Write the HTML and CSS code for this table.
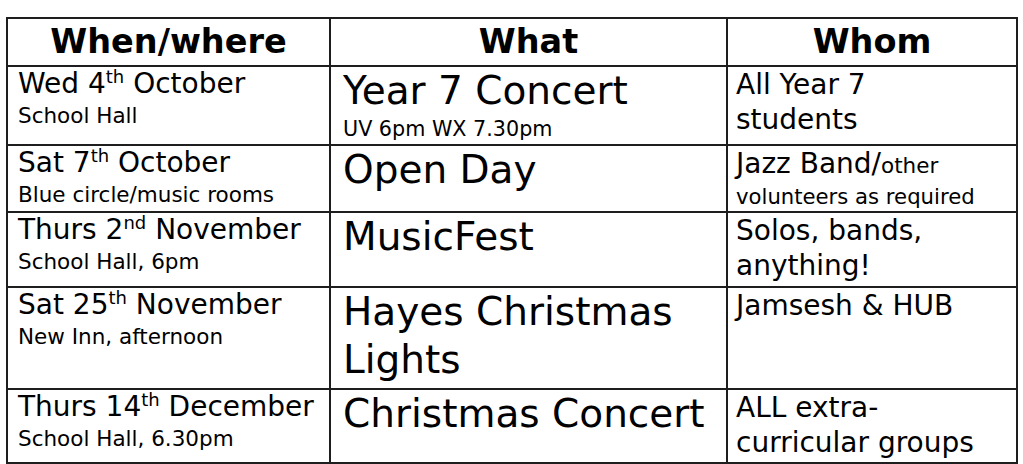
FILE: index.html
```html
<!DOCTYPE html>
<html>
<head>
<meta charset="utf-8">
<link rel="stylesheet" href="styles.css">
</head>
<body>
<table class="events">
  <colgroup>
    <col class="c-when">
    <col class="c-what">
    <col class="c-whom">
  </colgroup>
  <tr class="head">
    <th>When/where</th>
    <th>What</th>
    <th>Whom</th>
  </tr>
  <tr class="r1">
    <td><div class="date">Wed 4<sup>th</sup> October</div><div class="place">School Hall</div></td>
    <td><div class="what">Year 7 Concert</div><div class="whatsub">UV 6pm WX 7.30pm</div></td>
    <td><div class="whom">All Year 7<br>students</div></td>
  </tr>
  <tr class="r2">
    <td><div class="date">Sat 7<sup>th</sup> October</div><div class="place">Blue circle/music rooms</div></td>
    <td><div class="what">Open Day</div></td>
    <td><div class="whom">Jazz Band/<span class="small">other</span></div><div class="whomsmall">volunteers as required</div></td>
  </tr>
  <tr class="r3">
    <td><div class="date">Thurs 2<sup>nd</sup> November</div><div class="place">School Hall, 6pm</div></td>
    <td><div class="what">MusicFest</div></td>
    <td><div class="whom">Solos, bands,<br>anything!</div></td>
  </tr>
  <tr class="r4">
    <td><div class="date">Sat 25<sup>th</sup> November</div><div class="place">New Inn, afternoon</div></td>
    <td><div class="what">Hayes Christmas<br>Lights</div></td>
    <td><div class="whom">Jamsesh &amp; HUB</div></td>
  </tr>
  <tr class="r5">
    <td><div class="date">Thurs 14<sup>th</sup> December</div><div class="place">School Hall, 6.30pm</div></td>
    <td><div class="what">Christmas Concert</div></td>
    <td><div class="whom">ALL extra-<br>curricular groups</div></td>
  </tr>
</table>
</body>
</html>
```

FILE: styles.css
```css
html, body {
  margin: 0;
  padding: 0;
  background: #ffffff;
}

body {
  font-family: "DejaVu Sans", sans-serif;
  color: #000;
}

.events {
  border-collapse: collapse;
  margin: 17px 0 0 6px;
  width: 1010px;
  table-layout: fixed;
}

.c-when { width: 323px; }
.c-what { width: 397px; }
.c-whom { width: 290px; }

.events th,
.events td {
  border: 2px solid #1e1e1e;
  vertical-align: top;
  text-align: left;
  padding: 0 4px 0 10px;
}

.events th {
  font-weight: bold;
  font-size: 33.5px;
  text-align: center;
  line-height: 46px;
  height: 46px;
  vertical-align: middle;
  padding: 0;
}

.r1 td { height: 77px; }
.r2 td { height: 64px; }
.r3 td { height: 73px; }
.r4 td { height: 100px; }
.r5 td { height: 72px; }

.date {
  font-size: 28px;
  line-height: 34px;
  white-space: nowrap;
}

.date sup {
  font-size: 18px;
  line-height: 0;
  vertical-align: 10px;
}

.place {
  font-size: 21.5px;
  line-height: 30px;
  white-space: nowrap;
}

.events td:nth-child(2) {
  padding-left: 12px;
}

.events td:nth-child(3) {
  padding-left: 8px;
}

.what {
  font-size: 39px;
  line-height: 48px;
  white-space: nowrap;
}

.whatsub {
  font-size: 20.7px;
  line-height: 28px;
}

.whom {
  font-size: 28px;
  line-height: 35px;
  white-space: nowrap;
}

.whom .small {
  font-size: 21.5px;
}

.whomsmall {
  font-size: 21.2px;
  line-height: 28px;
  white-space: nowrap;
}
```
